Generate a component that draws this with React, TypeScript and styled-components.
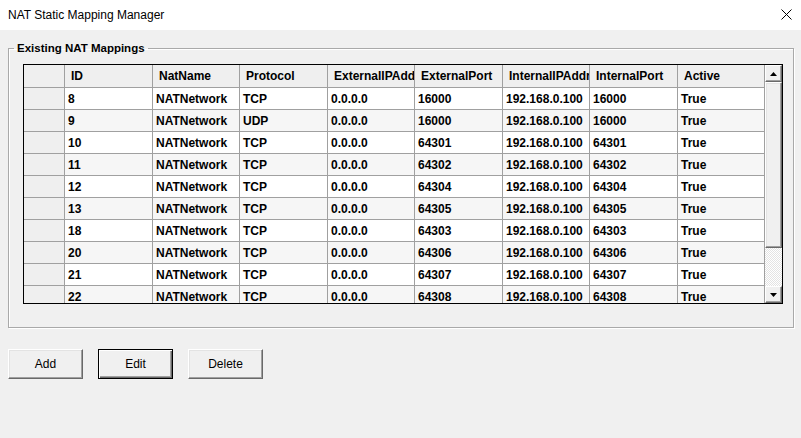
import React from "react";
import styled, { createGlobalStyle } from "styled-components";

const GlobalStyle = createGlobalStyle`
  html, body { margin: 0; padding: 0; background: #f0f0f0; }
  body { font-family: "Liberation Sans", Arial, sans-serif; color: #000; }
  * { box-sizing: border-box; }
`;

const COLS = "41px 88px 87px 88px 87px 88px 87px 88px 87px";

const Window = styled.div`
  width: 801px;
  height: 438px;
  display: flex;
  flex-direction: column;
  background: #f0f0f0;
  overflow: hidden;
`;

const TitleBar = styled.div`
  height: 30px;
  flex: none;
  background: #ffffff;
  display: flex;
  align-items: center;
  justify-content: space-between;
  padding: 0 9px 1px 8px;
  font-size: 12px;
  color: #000;
`;

const CloseButton = styled.div`
  width: 12px;
  height: 12px;
  display: flex;
  align-items: center;
  justify-content: center;
`;

const Body = styled.div`
  flex: 1;
  padding: 11px 7px 0 8px;
  display: flex;
  flex-direction: column;
`;

const GroupBox = styled.fieldset`
  margin: 0;
  padding: 0;
  width: 786px;
  min-width: 0;
  border: 1px solid #a9a9a9;
  box-shadow: 1px 1px 0 #ffffff, inset 1px 1px 0 #ffffff;
`;

const Legend = styled.legend`
  margin-left: 5px;
  padding: 0 3px;
  font-size: 11.5px;
  line-height: 14px;
  font-weight: bold;
`;

const Grid = styled.div`
  margin: 9px 10px 23px 14px;
  width: 760px;
  height: 240px;
  border: 1px solid #000;
  display: flex;
  background: #ffffff;
`;

const GridBody = styled.div`
  width: 741px;
  height: 238px;
  overflow: hidden;
  display: flex;
  flex-direction: column;
`;

const Row = styled.div<{ $header?: boolean }>`
  display: grid;
  grid-template-columns: ${COLS};
  flex: none;
  height: ${(p) => (p.$header ? 23 : 22)}px;
`;

const Cell = styled.div<{ $header?: boolean; $alt?: boolean; $rowHeader?: boolean }>`
  border-right: 1px solid #a0a0a0;
  border-bottom: 1px solid #a0a0a0;
  background: ${(p) =>
    p.$header || p.$rowHeader ? "#efefef" : p.$alt ? "#f6f6f6" : "#ffffff"};
  padding-left: ${(p) => (p.$header ? 6 : 3)}px;
  font-size: 12px;
  font-weight: bold;
  white-space: nowrap;
  overflow: hidden;
  display: flex;
  align-items: center;
  color: #000;
`;

const ScrollBar = styled.div`
  width: 17px;
  height: 238px;
  display: flex;
  flex-direction: column;
  background: #f0f0f0;
`;

const ScrollButton = styled.div`
  width: 17px;
  height: 17px;
  flex: none;
  background: #f0f0f0;
  border: 1px solid;
  border-color: #ffffff #696969 #696969 #ffffff;
  box-shadow: inset -1px -1px 0 #a0a0a0;
  display: flex;
  align-items: center;
  justify-content: center;
`;

const Track = styled.div`
  flex: 1;
  display: flex;
  flex-direction: column;
  background-color: #ffffff;
  background-image: repeating-conic-gradient(#e3e3e3 0 25%, #ffffff 0 50%);
  background-size: 2px 2px;
`;

const Thumb = styled.div<{ $size: number }>`
  height: ${(p) => p.$size}px;
  flex: none;
  background: #f0f0f0;
  border: 1px solid;
  border-color: #ffffff #696969 #696969 #ffffff;
  box-shadow: inset -1px -1px 0 #a0a0a0, inset 1px 1px 0 #e3e3e3;
`;

const ButtonRow = styled.div`
  margin-top: 21px;
  display: flex;
  gap: 15px;
`;

const Button = styled.button<{ $default?: boolean }>`
  width: 75px;
  height: 30px;
  margin: 0;
  padding: 0 0 1px;
  font-family: "Liberation Sans", Arial, sans-serif;
  font-size: 12px;
  color: #000;
  background: #f0f0f0;
  border: 1px solid;
  border-color: ${(p) =>
    p.$default ? "#000 #000 #000 #000" : "#ffffff #696969 #696969 #ffffff"};
  box-shadow: ${(p) =>
    p.$default
      ? "inset 1px 1px 0 #ffffff, inset -1px -1px 0 #696969, inset -2px -2px 0 #a0a0a0"
      : "inset -1px -1px 0 #a0a0a0, inset 1px 1px 0 #e3e3e3"};
`;

const Arrow = ({ up }: { up?: boolean }) => (
  <svg width="7" height="4" viewBox="0 0 7 4">
    {up ? <polygon points="0,4 7,4 3.5,0" fill="#000" /> : <polygon points="0,0 7,0 3.5,4" fill="#000" />}
  </svg>
);

const headers = [
  "ID",
  "NatName",
  "Protocol",
  "ExternalIPAddress",
  "ExternalPort",
  "InternalIPAddress",
  "InternalPort",
  "Active",
];

const data: [number, string, string, number][] = [
  [8, "TCP", "16000", 16000],
  [9, "UDP", "16000", 16000],
  [10, "TCP", "64301", 64301],
  [11, "TCP", "64302", 64302],
  [12, "TCP", "64304", 64304],
  [13, "TCP", "64305", 64305],
  [18, "TCP", "64303", 64303],
  [20, "TCP", "64306", 64306],
  [21, "TCP", "64307", 64307],
  [22, "TCP", "64308", 64308],
];

export default function App() {
  return (
    <>
      <GlobalStyle />
      <Window>
        <TitleBar>
          <span>NAT Static Mapping Manager</span>
          <CloseButton>
            <svg width="11" height="11" viewBox="0 0 11 11">
              <path d="M0.5 0.5 L10.5 10.5 M10.5 0.5 L0.5 10.5" stroke="#000" strokeWidth="1" />
            </svg>
          </CloseButton>
        </TitleBar>
        <Body>
          <GroupBox>
            <Legend>Existing NAT Mappings</Legend>
            <Grid>
              <GridBody>
                <Row $header>
                  <Cell $header />
                  {headers.map((h) => (
                    <Cell $header key={h}>
                      {h}
                    </Cell>
                  ))}
                </Row>
                {data.map(([id, proto, ext, int], i) => (
                  <Row key={id}>
                    <Cell $rowHeader />
                    <Cell $alt={i % 2 === 1}>{id}</Cell>
                    <Cell $alt={i % 2 === 1}>NATNetwork</Cell>
                    <Cell $alt={i % 2 === 1}>{proto}</Cell>
                    <Cell $alt={i % 2 === 1}>0.0.0.0</Cell>
                    <Cell $alt={i % 2 === 1}>{ext}</Cell>
                    <Cell $alt={i % 2 === 1}>192.168.0.100</Cell>
                    <Cell $alt={i % 2 === 1}>{int}</Cell>
                    <Cell $alt={i % 2 === 1}>True</Cell>
                  </Row>
                ))}
              </GridBody>
              <ScrollBar>
                <ScrollButton>
                  <Arrow up />
                </ScrollButton>
                <Track>
                  <Thumb $size={166} />
                </Track>
                <ScrollButton>
                  <Arrow />
                </ScrollButton>
              </ScrollBar>
            </Grid>
          </GroupBox>
          <ButtonRow>
            <Button>Add</Button>
            <Button $default>Edit</Button>
            <Button>Delete</Button>
          </ButtonRow>
        </Body>
      </Window>
    </>
  );
}
